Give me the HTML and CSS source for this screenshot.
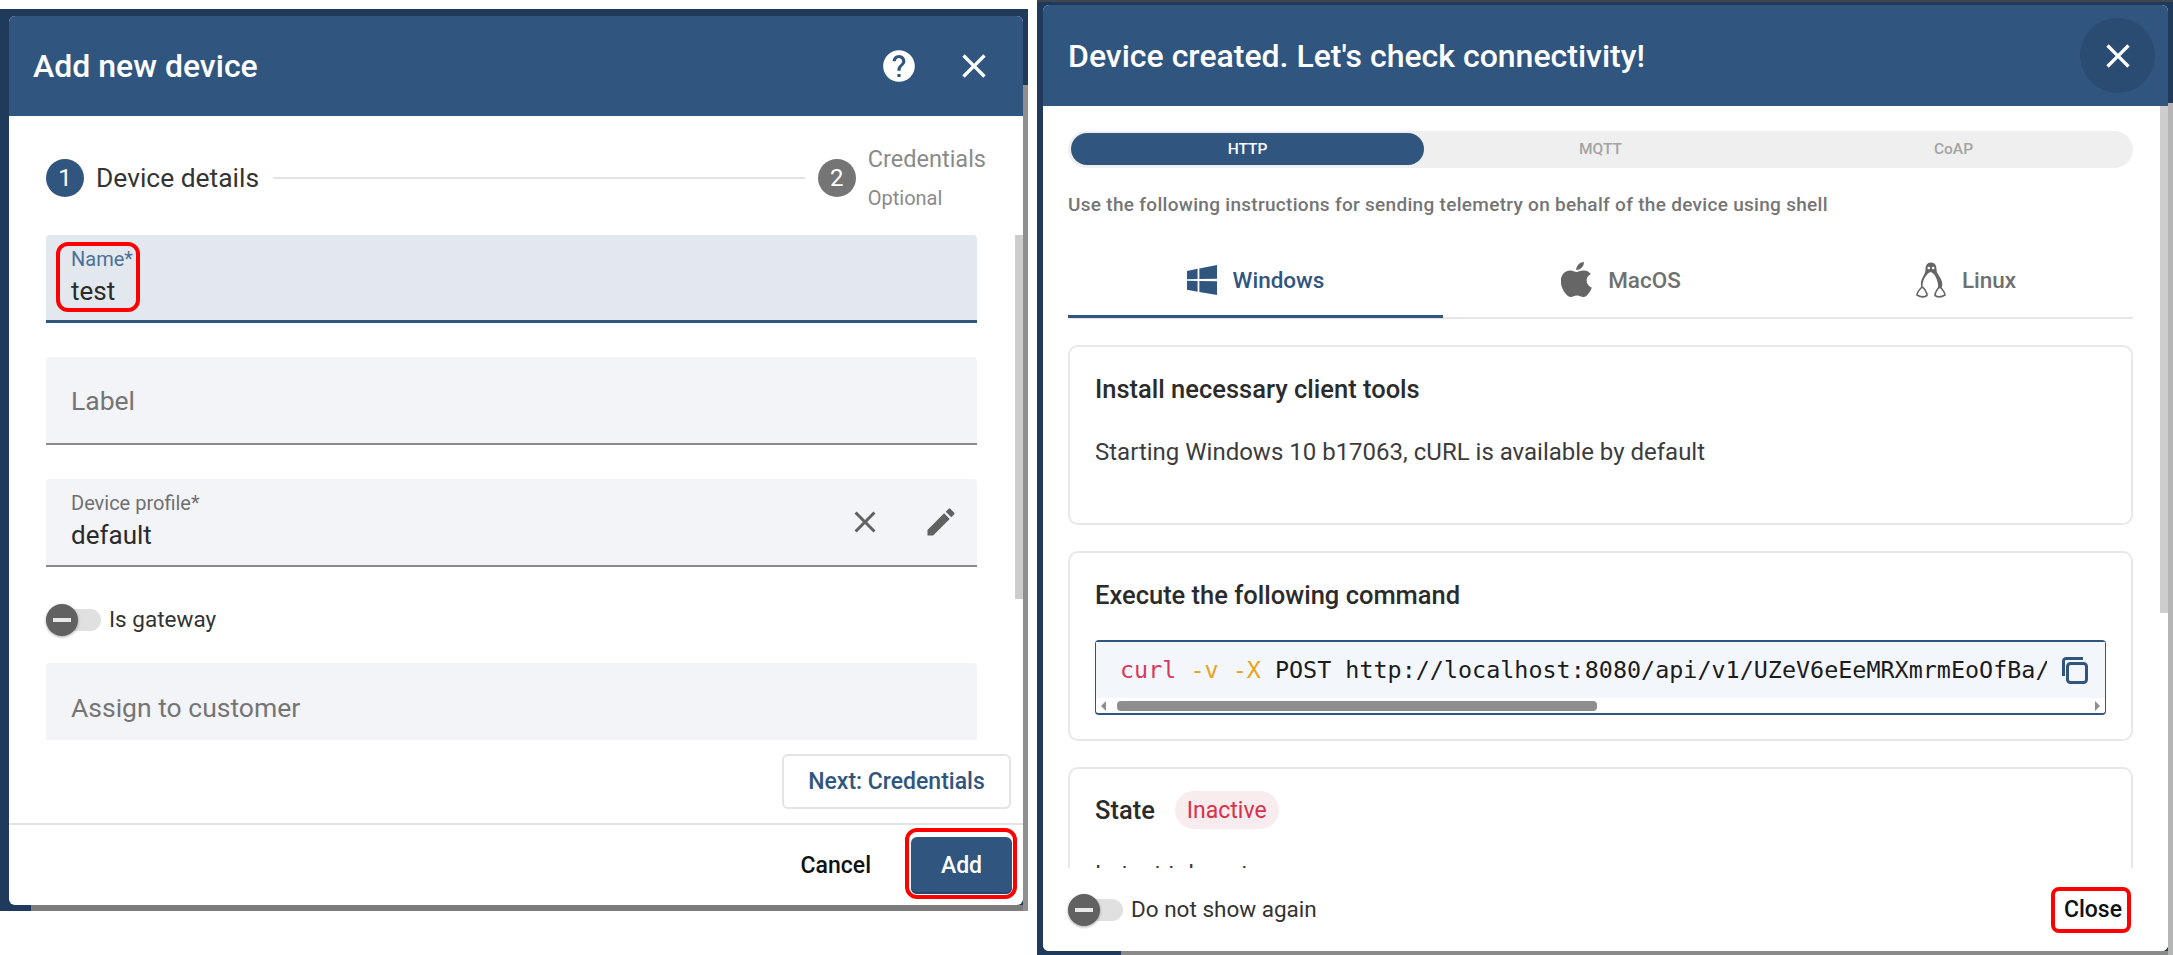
FILE: index.html
```html
<!DOCTYPE html>
<html>
<head>
    <meta charset="UTF-8">
    <title>Add new device</title>
    <link rel="stylesheet" href="styles.css">
</head>
<body>
    <div class="shot shot-left">
        <div class="modal modal-add">
            <div class="modal-header header-add">
                <h2 class="modal-title">Add new device</h2>
                <svg class="icon-help" viewBox="0 0 24 24"><path d="M12 2C6.48 2 2 6.48 2 12s4.48 10 10 10 10-4.48 10-10S17.52 2 12 2zm1 17h-2v-2h2v2zm2.07-7.75l-.9.92C13.45 12.9 13 13.5 13 15h-2v-.5c0-1.1.45-2.1 1.17-2.83l1.24-1.26c.37-.36.59-.86.59-1.41 0-1.1-.9-2-2-2s-2 .9-2 2H8c0-2.21 1.79-4 4-4s4 1.79 4 4c0 .88-.36 1.68-.93 2.25z"/></svg>
                <svg class="icon-close" viewBox="0 0 24 24"><path d="M19 6.41L17.59 5 12 10.59 6.41 5 5 6.41 10.59 12 5 17.59 6.41 19 12 13.41 17.59 19 19 17.59 13.41 12z"/></svg>
            </div>
            <div class="add-body">
                <div class="add-scroll">
                    <div class="stepper">
                        <span class="step-num step-active">1</span>
                        <span class="step-label">Device details</span>
                        <span class="step-line"></span>
                        <span class="step-num step-idle">2</span>
                        <div class="step-text">
                            <span class="step-name">Credentials</span>
                            <span class="step-sub">Optional</span>
                        </div>
                    </div>
                    <div class="field field-focus">
                        <div class="field-text">
                            <span class="field-label label-focus">Name*</span>
                            <span class="field-value">test</span>
                        </div>
                        <span class="mark mark-name"></span>
                    </div>
                    <div class="field field-gap">
                        <span class="field-hint">Label</span>
                    </div>
                    <div class="field field-gap field-profile">
                        <div class="field-text">
                            <span class="field-label">Device profile*</span>
                            <span class="field-value">default</span>
                        </div>
                        <svg class="icon-field" viewBox="0 0 24 24"><path d="M19 6.41L17.59 5 12 10.59 6.41 5 5 6.41 10.59 12 5 17.59 6.41 19 12 13.41 17.59 19 19 17.59 13.41 12z"/></svg>
                        <svg class="icon-field" viewBox="0 0 24 24"><path d="M3 17.25V21h3.75L17.81 9.94l-3.75-3.75L3 17.25zM20.71 7.04c.39-.39.39-1.02 0-1.41l-2.34-2.34c-.39-.39-1.02-.39-1.41 0l-1.83 1.83 3.75 3.75 1.83-1.83z"/></svg>
                    </div>
                    <div class="toggle-row gateway-row">
                        <span class="toggle"><span class="toggle-thumb"></span></span>
                        <span class="toggle-text">Is gateway</span>
                    </div>
                    <div class="field field-plain">
                        <span class="field-hint">Assign to customer</span>
                    </div>
                </div>
                <div class="next-row">
                    <button class="btn-next" type="button">Next: Credentials</button>
                </div>
                <span class="scroll-thumb thumb-add"></span>
            </div>
            <div class="add-footer">
                <button class="btn-text btn-cancel" type="button">Cancel</button>
                <div class="mark-wrap">
                    <button class="btn-add" type="button">Add</button>
                    <span class="mark mark-add"></span>
                </div>
            </div>
        </div>
    </div>

    <div class="shot shot-right">
        <div class="modal modal-check">
            <div class="modal-header header-check">
                <h2 class="modal-title">Device created. Let's check connectivity!</h2>
                <span class="close-round">
                    <svg class="icon-close" viewBox="0 0 24 24"><path d="M19 6.41L17.59 5 12 10.59 6.41 5 5 6.41 10.59 12 5 17.59 6.41 19 12 13.41 17.59 19 19 17.59 13.41 12z"/></svg>
                </span>
            </div>
            <div class="check-body">
                <div class="pills">
                    <span class="pill pill-active">HTTP</span>
                    <span class="pill">MQTT</span>
                    <span class="pill">CoAP</span>
                </div>
                <p class="hint">Use the following instructions for sending telemetry on behalf of the device using shell</p>
                <div class="tabs">
                    <div class="tab tab-active">
                        <svg class="tab-icon icon-windows" viewBox="3 3 17 19" preserveAspectRatio="none"><path d="M3,12V6.75L9,5.43V11.91L3,12M20,3V11.75L10,11.9V5.21L20,3M3,13L9,13.09V19.9L3,18.75V13M20,13.25V22L10,20.09V13.1L20,13.25Z"/></svg>
                        <span>Windows</span>
                    </div>
                    <div class="tab">
                        <svg class="tab-icon icon-apple" viewBox="4 2 16.2 20" preserveAspectRatio="none"><path d="M18.71,19.5C17.88,20.74 17,21.95 15.66,21.97C14.32,22 13.89,21.18 12.37,21.18C10.84,21.18 10.37,21.95 9.1,22C7.79,22.05 6.8,20.68 5.96,19.47C4.25,17 2.94,12.45 4.7,9.39C5.57,7.87 7.13,6.91 8.82,6.88C10.1,6.86 11.32,7.75 12.11,7.75C12.89,7.75 14.37,6.68 15.92,6.84C16.57,6.87 18.39,7.1 19.56,8.82C19.47,8.88 17.39,10.1 17.41,12.63C17.44,15.65 20.06,16.66 20.09,16.67C20.06,16.74 19.67,18.11 18.71,19.5M13,3.5C13.73,2.67 14.94,2.04 15.94,2C16.07,3.17 15.6,4.35 14.9,5.19C14.21,6.04 13.07,6.7 11.95,6.61C11.8,5.46 12.36,4.26 13,3.5Z"/></svg>
                        <span>MacOS</span>
                    </div>
                    <div class="tab">
                        <svg class="tab-icon icon-linux" viewBox="0 0 30 36">
                            <path d="M15 .5C11 .5 9.5 3.5 9.5 7.5 9.5 12 6 15 5 20 4.5 24 6 30 9 32H21C25 29 27 24 26 20 25 15 20.5 12 20.5 7.5 20.5 3.5 19 .5 15 .5Z"/>
                            <path class="tux-belly" d="M15 10C11 11 7 17 6.5 23 6.5 27 9 31 13 32H18C21 30 22.5 26 22 22 21 17 19 12 15 10Z"/>
                            <circle class="tux-belly" cx="12.8" cy="6" r="1.3"/>
                            <circle class="tux-belly" cx="17.2" cy="6" r="1.3"/>
                            <path class="tux-line" d="M6 25C3 28 1 31 1 33 4 35 8 35.5 11 33.5 11 30 8 26 6 25ZM24 25C27 28 29 31 29 33 26 35 22 35.5 19 33.5 19 30 22 26 24 25Z"/>
                        </svg>
                        <span>Linux</span>
                    </div>
                </div>
                <div class="card card-tools">
                    <h3 class="card-title">Install necessary client tools</h3>
                    <p class="card-text">Starting Windows 10 b17063, cURL is available by default</p>
                </div>
                <div class="card card-command">
                    <h3 class="card-title">Execute the following command</h3>
                    <div class="code-box">
                        <div class="code-row">
                            <code class="code-line"><span class="tok-cmd">curl</span> <span class="tok-flag">-v</span> <span class="tok-flag">-X</span> POST http://localhost:8080/api/v1/UZeV6eEeMRXmrmEoOfBa/telemetry</code>
                            <svg class="icon-copy" viewBox="0 0 26 27"><path d="M1.5 19V4A2.5 2.5 0 0 1 4 1.5H21"/><rect x="5.5" y="6.5" width="19" height="19" rx="3"/></svg>
                        </div>
                        <div class="code-scroll">
                            <span class="arrow arrow-left"></span>
                            <span class="code-thumb"></span>
                            <span class="arrow arrow-right"></span>
                        </div>
                    </div>
                </div>
                <div class="card card-state">
                    <div class="state-row">
                        <h3 class="card-title">State</h3>
                        <span class="chip">Inactive</span>
                    </div>
                    <p class="card-text state-text">Latest telemetry</p>
                </div>
                <span class="scroll-thumb thumb-check"></span>
            </div>
            <div class="check-footer">
                <div class="toggle-row">
                    <span class="toggle"><span class="toggle-thumb"></span></span>
                    <span class="toggle-text">Do not show again</span>
                </div>
                <div class="mark-wrap">
                    <button class="btn-text btn-close" type="button">Close</button>
                    <span class="mark mark-close"></span>
                </div>
            </div>
        </div>
    </div>
</body>
</html>
```

FILE: styles.css
```css
* {
    box-sizing: border-box;
}
body {
    display: flex;
    gap: 9px;
    height: 955px;
    margin: 0;
    overflow: hidden;
    background: #fff;
    font-family: Roboto, "Liberation Sans", sans-serif;
    color: #2b2b2b;
}
h2, h3, p {
    margin: 0;
}
button {
    font-family: inherit;
    cursor: pointer;
}

/* dimmed page behind each dialog */
.shot {
    background-color: #1f3a5a;
    background-repeat: no-repeat;
}
.shot-left {
    width: 1028px;
    height: 902px;
    margin-top: 9px;
    padding: 7px 5px 6px 9px;
    background-image: linear-gradient(#8f8f8f, #8f8f8f), linear-gradient(#7c7c7c, #7c7c7c);
    background-position: right 76px, 31px bottom;
    background-size: 5px 100%, 100% 6px;
}
.shot-right {
    width: 1136px;
    height: 955px;
    padding: 5px 5px 4px 6px;
    background-image: linear-gradient(#3f4650, #3f4650), linear-gradient(#b5b5b5, #b5b5b5), linear-gradient(#8a8a8a, #8a8a8a);
    background-position: 0 0, right 103px, 84px bottom;
    background-size: 100% 2px, 5px 100%, 100% 4px;
}

.modal {
    display: flex;
    flex-direction: column;
    height: 100%;
    background: #fff;
    border-radius: 6px;
    overflow: hidden;
}
.modal-header {
    display: flex;
    align-items: center;
    flex: none;
    background: #305680;
    color: #fff;
}
.modal-title {
    flex: 1;
    font-size: 32px;
    font-weight: 500;
}
.header-add {
    height: 100px;
    padding: 0 29px 0 24px;
}
.header-check {
    height: 101px;
    padding: 0 13px 0 25px;
}
.icon-help {
    width: 38px;
    height: 38px;
    margin-right: 36px;
    fill: #fff;
}
.icon-close {
    width: 40px;
    height: 40px;
    fill: #fff;
}
.close-round {
    display: flex;
    align-items: center;
    justify-content: center;
    width: 75px;
    height: 75px;
    border-radius: 50%;
    background: #2a4c72;
}

/* add device dialog */
.add-body {
    position: relative;
    flex: 1;
}
.add-scroll {
    height: 624px;
    padding: 30px 46px 0 37px;
    overflow: hidden;
}
.stepper {
    display: flex;
    align-items: center;
    height: 64px;
    margin-bottom: 25px;
}
.step-num {
    display: flex;
    align-items: center;
    justify-content: center;
    flex: none;
    width: 38px;
    height: 38px;
    border-radius: 50%;
    color: #fff;
    font-size: 24px;
}
.step-active {
    background: #305680;
}
.step-idle {
    background: #757575;
}
.step-label {
    margin-left: 12px;
    font-size: 26.4px;
    color: #333;
}
.step-line {
    flex: 1;
    height: 2px;
    margin: 0 13px 0 14px;
    background: #e3e3e3;
}
.step-text {
    display: flex;
    flex-direction: column;
    gap: 18px;
    flex: none;
    margin-left: 12px;
    margin-right: -9px;
    color: #8a8a8a;
}
.step-name {
    font-size: 23.5px;
    line-height: 22px;
}
.step-sub {
    font-size: 20px;
    line-height: 20px;
}

.field {
    position: relative;
    display: flex;
    align-items: center;
    height: 88px;
    padding: 0 25px;
    background: #f3f4f8;
    border-bottom: 2px solid #8a8a8a;
    border-radius: 4px 4px 0 0;
}
.field-gap {
    margin-top: 34px;
}
.field-focus {
    background: #e3e8ef;
    border-bottom: 3px solid #305680;
}
.field-plain {
    border-bottom: none;
}
.field-profile {
    padding-right: 18px;
    gap: 40px;
}
.field-text {
    flex: 1;
    margin-top: -3px;
}
.field-label {
    display: block;
    font-size: 20px;
    line-height: 22px;
    color: #707070;
}
.label-focus {
    color: #4d7096;
}
.field-value {
    display: block;
    margin-top: 7px;
    font-size: 26px;
    line-height: 28px;
    color: #2b2b2b;
}
.field-hint {
    font-size: 26.5px;
    color: #757575;
}
.icon-field {
    width: 36px;
    height: 36px;
    fill: #616161;
}

.toggle-row {
    display: flex;
    align-items: center;
    height: 26px;
}
.gateway-row {
    margin: 40px 0 30px;
}
.toggle {
    position: relative;
    display: block;
    width: 55px;
    height: 22px;
    border-radius: 11px;
    background: #e0e0e0;
}
.toggle-thumb {
    position: absolute;
    top: -5px;
    left: 0;
    display: flex;
    align-items: center;
    justify-content: center;
    width: 32px;
    height: 32px;
    border-radius: 50%;
    background: #616161;
    box-shadow: 0 1px 3px rgba(0, 0, 0, 0.35);
}
.toggle-thumb::after {
    content: "";
    width: 18px;
    height: 4px;
    background: #e8e8e8;
}
.toggle-text {
    margin-left: 8px;
    padding-bottom: 2px;
    font-size: 22.5px;
    color: #333;
}

.next-row {
    display: flex;
    justify-content: flex-end;
    padding: 14px 12px 0 0;
}
.btn-next {
    width: 229px;
    height: 55px;
    background: #fff;
    border: 2px solid #e4e4e4;
    border-radius: 6px;
    color: #305680;
    font-size: 23px;
    font-weight: 500;
}
.scroll-thumb {
    position: absolute;
    top: 0;
    right: 0;
    width: 8px;
    background: #cdcdcd;
}
.thumb-add {
    top: 119px;
    height: 364px;
}
.add-footer {
    display: flex;
    align-items: center;
    justify-content: flex-end;
    flex: none;
    height: 82px;
    padding: 0 11px 0 0;
    border-top: 2px solid #e4e4e4;
}
.btn-text {
    padding: 0;
    background: none;
    border: none;
    color: #111;
    font-size: 23px;
    font-weight: 500;
}
.btn-cancel {
    margin-right: 40px;
}
.btn-add {
    display: block;
    width: 101px;
    height: 57px;
    background: #305680;
    border: none;
    box-shadow: inset 0 -2px 0 #24466c;
    border-radius: 6px;
    color: #fff;
    font-size: 23px;
    font-weight: 500;
}

/* red callouts drawn over the screenshot */
.mark-wrap {
    position: relative;
}
.mark {
    position: absolute;
    border: 4px solid #f00;
    border-radius: 12px;
    pointer-events: none;
}
.mark-name {
    top: 7px;
    left: 10px;
    width: 84px;
    height: 70px;
}
.mark-add {
    top: -9px;
    left: -6px;
    width: 112px;
    height: 71px;
}
.mark-close {
    top: -9px;
    left: -13px;
    width: 80px;
    height: 46px;
    border-radius: 8px;
}

/* connectivity dialog */
.check-body {
    position: relative;
    flex: 1;
    min-height: 0;
    padding: 25px 35px 0 25px;
    overflow: hidden;
}
.pills {
    display: grid;
    grid-template-columns: repeat(3, 1fr);
    height: 37px;
    padding: 2px 3px 3px;
    background: #efefef;
    border-radius: 19px;
}
.pill {
    display: flex;
    align-items: center;
    justify-content: center;
    border-radius: 16px;
    font-size: 15.5px;
    font-weight: 500;
    color: #a3a3a3;
}
.pill-active {
    background: #305680;
    color: #fff;
}
.hint {
    margin-top: 27px;
    font-size: 19px;
    font-weight: 500;
    letter-spacing: 0.3px;
    line-height: 20px;
    color: #757575;
}
.tabs {
    display: grid;
    grid-template-columns: 375px 356px 334px;
    height: 79px;
    margin-top: 25px;
    border-bottom: 2px solid #e6e6e6;
}
.tab {
    display: flex;
    align-items: center;
    justify-content: center;
    gap: 16px;
    height: 78px;
    padding-top: 1px;
    font-size: 22.5px;
    font-weight: 500;
    color: #707070;
}
.tab-active {
    box-shadow: inset 0 -3px 0 #305680;
    color: #305680;
}
.tab-icon {
    fill: #666;
}
.icon-windows {
    width: 30px;
    height: 30px;
    fill: #305680;
}
.icon-apple {
    width: 31px;
    height: 35px;
}
.icon-linux {
    width: 30px;
    height: 36px;
}
.tux-belly {
    fill: #fff;
}
.tux-line {
    fill: #fff;
    stroke: #666;
    stroke-width: 1.6;
}

.card {
    margin-top: 26px;
    padding: 28px 25px 0;
    border: 2px solid #e8e8e8;
    border-radius: 10px;
}
.card-tools {
    height: 180px;
}
.card-command {
    height: 190px;
}
.card-state {
    height: 200px;
}
.card-title {
    font-size: 25.5px;
    font-weight: 500;
    line-height: 28px;
    color: #2b2b2b;
}
.card-text {
    margin-top: 35px;
    font-size: 24px;
    line-height: 28px;
    color: #3c3c3c;
}

.code-box {
    margin-top: 31px;
    height: 75px;
    border: 1px solid #305680;
    border-width: 2px 1px;
    border-radius: 4px;
}
.code-row {
    display: flex;
    align-items: center;
    height: 56px;
    padding-left: 24px;
    background: #f3f6fb;
}
.code-line {
    flex: 1;
    min-width: 0;
    overflow: hidden;
    white-space: nowrap;
    font-family: "DejaVu Sans Mono", monospace;
    font-size: 23.4px;
    color: #1c1c1c;
}
.tok-cmd {
    color: #d73a5a;
}
.tok-flag {
    color: #e8a317;
}
.icon-copy {
    flex: none;
    width: 26px;
    height: 27px;
    margin: 0 17px 0 15px;
    fill: none;
    stroke: #305680;
    stroke-width: 3;
}
.code-scroll {
    display: flex;
    align-items: center;
    height: 15px;
    padding: 0 5px;
}
.code-thumb {
    width: 480px;
    height: 10px;
    margin-left: 11px;
    border-radius: 4px;
    background: #8e8e8e;
}
.arrow {
    width: 0;
    height: 0;
    border-top: 5px solid transparent;
    border-bottom: 5px solid transparent;
}
.arrow-left {
    border-right: 5px solid #8e8e8e;
}
.arrow-right {
    margin-left: auto;
    border-left: 5px solid #8e8e8e;
}

.state-row {
    display: flex;
    align-items: center;
    gap: 20px;
    margin-top: -6px;
}
.chip {
    display: flex;
    align-items: center;
    height: 38px;
    padding: 0 12px;
    border-radius: 19px;
    background: #f9ecee;
    font-size: 23px;
    color: #d6324a;
}
.state-text {
    margin-top: 31px;
}
.thumb-check {
    height: 507px;
}
.check-footer {
    display: flex;
    align-items: center;
    justify-content: space-between;
    flex: none;
    height: 83px;
    padding: 0 46px 0 25px;
    background: #fff;
}
.btn-close {
    display: block;
    line-height: 28px;
}
```
